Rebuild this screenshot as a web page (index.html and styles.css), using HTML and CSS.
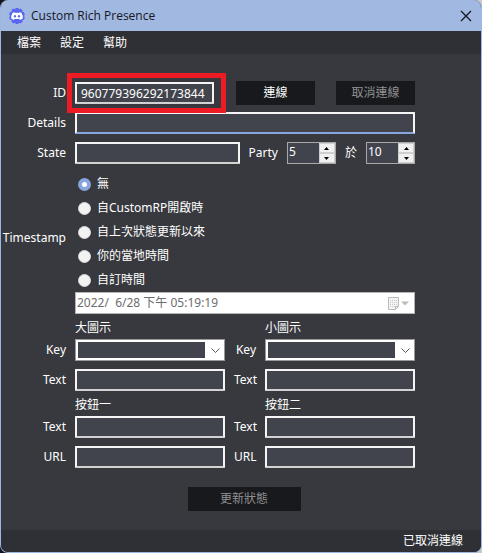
FILE: index.html
```html
<!DOCTYPE html>
<html lang="zh-Hant">
<head>
<meta charset="utf-8">
<meta name="viewport" content="width=device-width, initial-scale=1">
<title>Custom Rich Presence</title>
<link rel="stylesheet" href="styles.css">
</head>
<body>
<div class="window">
  <header class="titlebar">
    <svg class="logo" viewBox="0 0 16 16" aria-hidden="true">
      <path fill="#5865f2" d="M6.600 0h2.800l.5 1.600 1.500-1 2.200 1.600-.4 1.600 1.800.5.9 2.400-1.300 1.300 1.300 1.300-.9 2.400-1.800.5.4 1.600-2.200 1.600-1.500-1L9.400 16H6.600l-.5-1.600-1.500 1-2.200-1.600.4-1.600-1.800-.5-.9-2.400L1.400 8 .1 6.700l.9-2.400 1.800-.5-.4-1.600L4.600.6l1.500 1z"/>
      <path fill="#fff" d="M5.800 4.200 6.300 5q1.700-.3 3.400 0l.5-.8q1.300.2 2.400.9 1.400 2.500 1.200 5.500-1.300 1-2.800 1.300l-.7-1.100q-2.300.6-4.600 0L5 11.900q-1.500-.3-2.800-1.300Q2 7.600 3.400 5.100q1.100-.7 2.400-.9z"/>
      <ellipse cx="6" cy="8.300" rx="1.100" ry="1.200" fill="#5865f2"/>
      <ellipse cx="10" cy="8.300" rx="1.100" ry="1.200" fill="#5865f2"/>
    </svg>
    <h1 class="title">Custom Rich Presence</h1>
    <button class="close" type="button" aria-label="關閉">
      <svg viewBox="0 0 12 12" width="12" height="12"><path d="M1 1l10 10M11 1L1 11" fill="none" stroke="#101820" stroke-width="1.300"/></svg>
    </button>
  </header>
  <nav class="menu">
    <button type="button">檔案</button>
    <button type="button">設定</button>
    <button type="button">幫助</button>
  </nav>
  <form class="form">
    <div class="row">
      <label class="label" for="id">ID</label>
      <div class="line">
        <div class="marked"><input class="field" id="id" type="text" value="960779396292173844"></div>
        <div class="actions">
          <button class="button" type="button">連線</button>
          <button class="button" type="button" disabled>取消連線</button>
        </div>
      </div>
    </div>
    <div class="row">
      <label class="label" for="details">Details</label>
      <input class="field focused" id="details" type="text">
    </div>
    <div class="row">
      <label class="label" for="state">State</label>
      <div class="line party">
        <input class="field" id="state" type="text">
        <label for="size">Party</label>
        <div class="spinner">
          <input id="size" type="number" value="5">
          <div class="steps">
            <button type="button" aria-label="增加"><svg viewBox="0 0 5 3"><path d="M0 3h5L2.500 0z"/></svg></button>
            <button type="button" aria-label="減少"><svg viewBox="0 0 5 3"><path d="M0 0h5L2.500 3z"/></svg></button>
          </div>
        </div>
        <label for="max">於</label>
        <div class="spinner">
          <input id="max" type="number" value="10">
          <div class="steps">
            <button type="button" aria-label="增加"><svg viewBox="0 0 5 3"><path d="M0 3h5L2.500 0z"/></svg></button>
            <button type="button" aria-label="減少"><svg viewBox="0 0 5 3"><path d="M0 0h5L2.500 3z"/></svg></button>
          </div>
        </div>
      </div>
    </div>
    <div class="row stamp" role="radiogroup" aria-labelledby="stamp">
      <span class="label" id="stamp">Timestamp</span>
      <div class="options">
        <label><input type="radio" name="stamp" checked>無</label>
        <label><input type="radio" name="stamp">自CustomRP開啟時</label>
        <label><input type="radio" name="stamp">自上次狀態更新以來</label>
        <label><input type="radio" name="stamp">你的當地時間</label>
        <label><input type="radio" name="stamp">自訂時間</label>
      </div>
    </div>
    <div class="row">
      <div class="date">
        <input type="text" value="2022/  6/28 下午 05:19:19" aria-label="自訂時間" disabled>
        <svg viewBox="0 0 21 13" width="21" height="13" aria-hidden="true">
          <path d="M.5.5h10v9l-3 3h-7z" fill="#f4f4f4" stroke="#bdb9b9"/>
          <path d="M2 3.500h7M2 5.500h7M2 7.500h7M2 9.500h5" stroke="#c3c9d0" stroke-dasharray="1 1"/>
          <path d="M7.500 12.500v-3h3" fill="none" stroke="#bdb9b9"/>
          <path d="M13 4.500h8l-4 4z" fill="#bcbcb4"/>
        </svg>
      </div>
    </div>
    <div class="pairs">
      <h2 class="first">大圖示</h2>
      <h2 class="second">小圖示</h2>
      <label class="label" for="lk">Key</label>
      <select class="combo" id="lk"></select>
      <label class="label" for="sk">Key</label>
      <select class="combo" id="sk"></select>
      <label class="label" for="lt">Text</label>
      <input class="field" id="lt" type="text">
      <label class="label" for="st">Text</label>
      <input class="field" id="st" type="text">
    </div>
    <div class="pairs">
      <h2 class="first">按鈕一</h2>
      <h2 class="second">按鈕二</h2>
      <label class="label" for="t1">Text</label>
      <input class="field" id="t1" type="text">
      <label class="label" for="t2">Text</label>
      <input class="field" id="t2" type="text">
      <label class="label" for="u1">URL</label>
      <input class="field" id="u1" type="text">
      <label class="label" for="u2">URL</label>
      <input class="field" id="u2" type="text">
    </div>
    <button class="button update" type="button" disabled>更新狀態</button>
  </form>
  <footer class="status">已取消連線</footer>
</div>
</body>
</html>
```
FILE: styles.css
```css
* {
  box-sizing: border-box;
}

body {
  margin: 0;
  background: linear-gradient(90deg, #141319 50%, #c9c9cb 50%);
  color: #fff;
  font: 12px/16px "Noto Sans", "Noto Sans CJK TC", sans-serif;
}

button,
input,
select {
  font: inherit;
  color: inherit;
  margin: 0;
  padding: 0;
  border: 0;
  border-radius: 0;
  outline: 0;
  min-width: 0;
}

h1,
h2 {
  margin: 0;
  font-size: inherit;
  font-weight: 400;
}

.window {
  display: flex;
  flex-direction: column;
  min-height: 100vh;
  border: 1px solid #9db7e3;
  border-top: 0;
  border-radius: 8px;
  background: #38393e;
  overflow: hidden;
}

.titlebar {
  display: flex;
  align-items: center;
  gap: 6px;
  height: 31px;
  padding: 0 9px 0 8px;
  background: #a1b8e1;
  color: #14171d;
}

.logo {
  width: 16px;
  height: 16px;
}

.title {
  flex: 1;
  font-family: "Open Sans", sans-serif;
}

.close {
  display: flex;
  background: none;
}

.menu {
  display: flex;
  gap: 19px;
  height: 23px;
  padding: 0 16px;
  background: #2f3035;
}

.menu button {
  background: none;
}

.form {
  flex: 1;
  display: flex;
  flex-direction: column;
  gap: 8px;
  padding: 28px 66px 16px 0;
}

.row,
.pairs {
  display: grid;
  grid-template-columns: 65px 1fr;
  column-gap: 9px;
  align-items: center;
}

.label {
  text-align: right;
}

.field {
  width: 100%;
  height: 22px;
  padding: 0 4px;
  border: 2px solid #f5f5f5;
  border-bottom-color: #d2d2d2;
  border-radius: 1px;
  background: #42444d;
}

.focused {
  border-bottom-color: #88a4dc;
}

.line {
  display: flex;
  align-items: center;
  justify-content: space-between;
  height: 22px;
}

.marked {
  position: relative;
  width: 139px;
}

.marked::after {
  content: "";
  position: absolute;
  inset: -9px -12px -9px -8px;
  border: 5px solid #ed1c24;
  pointer-events: none;
}

.actions {
  display: flex;
  gap: 21px;
}

.button {
  width: 79px;
  height: 24px;
  background: #18191c;
}

.button:disabled {
  color: #909093;
}

.party {
  gap: 9px;
}

.party .field {
  flex: 1;
}

.spinner {
  display: flex;
  flex: none;
  width: 49px;
  height: 22px;
  border: 1px solid #a9a9a9;
  background: #42444d;
}

.spinner input {
  flex: 1;
  padding: 0 1px 2px;
  background: none;
  appearance: textfield;
}

.spinner input::-webkit-inner-spin-button {
  appearance: none;
}

.steps {
  display: grid;
  width: 16px;
  background: #f0f0f0;
}

.steps button {
  display: grid;
  place-items: center;
  border: 1px solid #cfcfcf;
  background: #f0f0f0;
}

.steps svg {
  width: 5px;
  height: 3px;
}

.options {
  display: grid;
  grid-auto-rows: 24px;
}

.options label {
  display: flex;
  align-items: center;
  gap: 6px;
  padding-left: 3px;
}

.options input {
  appearance: none;
  width: 13px;
  height: 13px;
  border: 1px solid #d8d8d8;
  border-radius: 50%;
  background: #f2f2f2;
}

.options input:checked {
  border: 4px solid #88a4dc;
  background: #fff;
}

.stamp {
  margin-bottom: -8px;
}

.stamp .label {
  padding-top: 12px;
}

.date {
  grid-column: 2;
  display: flex;
  align-items: center;
  height: 22px;
  padding: 0 5px 0 1px;
  border: 1px solid #b4b4b4;
  background: #fff;
}

.date input {
  flex: 1;
  background: none;
  color: #6d6d6d;
}

.pairs {
  grid-template-columns: 65px 1fr 22px 1fr;
  row-gap: 8px;
}

.pairs h2 {
  margin-bottom: -3px;
  line-height: 12px;
}

.first {
  grid-column: 2;
}

.second {
  grid-column: 4;
}

.combo {
  appearance: none;
  width: 100%;
  height: 22px;
  border: 1px solid #999;
  background:
    url("data:image/svg+xml,%3Csvg xmlns='http://www.w3.org/2000/svg' width='9' height='5'%3E%3Cpath d='M.5.5l4 4 4-4' fill='none' stroke='%23555'/%3E%3C/svg%3E") right 4px center / 9px 5px no-repeat,
    linear-gradient(#42444d, #42444d) 2px 2px / calc(100% - 21px) calc(100% - 4px) no-repeat,
    #fff;
}

.update {
  align-self: center;
  width: 113px;
  margin: 11px 0 0 72px;
}

.status {
  padding: 3px 18px;
  background: #2f3035;
  text-align: right;
}
```
